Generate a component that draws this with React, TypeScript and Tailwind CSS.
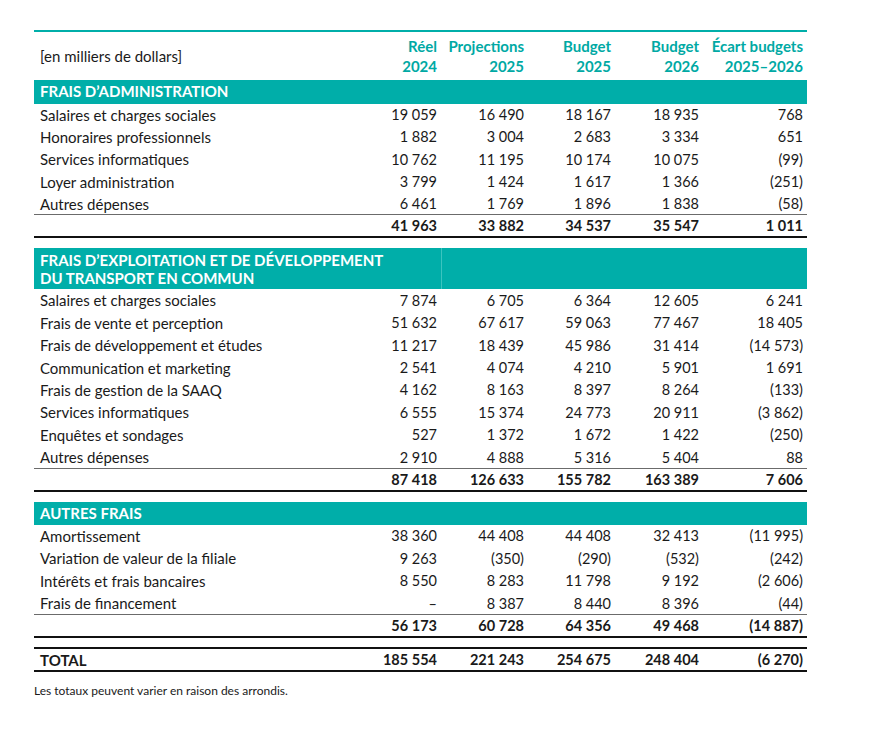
import React from "react";

type Row = { label: string; values: string[] };

type Section = {
  title: string[];
  rows: Row[];
  total: string[];
};

const SECTIONS: Section[] = [
  {
    title: ["FRAIS D’ADMINISTRATION"],
    rows: [
      { label: "Salaires et charges sociales", values: ["19 059", "16 490", "18 167", "18 935", "768"] },
      { label: "Honoraires professionnels", values: ["1 882", "3 004", "2 683", "3 334", "651"] },
      { label: "Services informatiques", values: ["10 762", "11 195", "10 174", "10 075", "(99)"] },
      { label: "Loyer administration", values: ["3 799", "1 424", "1 617", "1 366", "(251)"] },
      { label: "Autres dépenses", values: ["6 461", "1 769", "1 896", "1 838", "(58)"] },
    ],
    total: ["41 963", "33 882", "34 537", "35 547", "1 011"],
  },
  {
    title: ["FRAIS D’EXPLOITATION ET DE DÉVELOPPEMENT", "DU TRANSPORT EN COMMUN"],
    rows: [
      { label: "Salaires et charges sociales", values: ["7 874", "6 705", "6 364", "12 605", "6 241"] },
      { label: "Frais de vente et perception", values: ["51 632", "67 617", "59 063", "77 467", "18 405"] },
      { label: "Frais de développement et études", values: ["11 217", "18 439", "45 986", "31 414", "(14 573)"] },
      { label: "Communication et marketing", values: ["2 541", "4 074", "4 210", "5 901", "1 691"] },
      { label: "Frais de gestion de la SAAQ", values: ["4 162", "8 163", "8 397", "8 264", "(133)"] },
      { label: "Services informatiques", values: ["6 555", "15 374", "24 773", "20 911", "(3 862)"] },
      { label: "Enquêtes et sondages", values: ["527", "1 372", "1 672", "1 422", "(250)"] },
      { label: "Autres dépenses", values: ["2 910", "4 888", "5 316", "5 404", "88"] },
    ],
    total: ["87 418", "126 633", "155 782", "163 389", "7 606"],
  },
  {
    title: ["AUTRES FRAIS"],
    rows: [
      { label: "Amortissement", values: ["38 360", "44 408", "44 408", "32 413", "(11 995)"] },
      { label: "Variation de valeur de la filiale", values: ["9 263", "(350)", "(290)", "(532)", "(242)"] },
      { label: "Intérêts et frais bancaires", values: ["8 550", "8 283", "11 798", "9 192", "(2 606)"] },
      { label: "Frais de financement", values: ["–", "8 387", "8 440", "8 396", "(44)"] },
    ],
    total: ["56 173", "60 728", "64 356", "49 468", "(14 887)"],
  },
];

const HEADINGS = [
  ["Réel", "2024"],
  ["Projections", "2025"],
  ["Budget", "2025"],
  ["Budget", "2026"],
  ["Écart budgets", "2025–2026"],
];

const COLS = "grid grid-cols-[327px_80px_87px_87px_88px_104px]";

// numbers use a narrow no-break space as thousands separator
const nb = (s: string) => s.replace(/ /g, "\u202f");

function Num({ v }: { v: string }) {
  return <div className="text-right pr-[4px] whitespace-nowrap text-[14.5px]">{nb(v)}</div>;
}

function SectionBlock({ section, first }: { section: Section; first: boolean }) {
  const twoLines = section.title.length > 1;
  return (
    <div className={first ? "" : "mt-[10px]"}>
      {/* teal section bar */}
      <div className={`${COLS} bg-[#00aea9] text-white font-bold`}>
        <div className={`col-span-2 px-[6px] whitespace-nowrap ${twoLines ? "py-[2.5px] leading-[18px]" : "leading-[23.5px]"}`}>
          {section.title.map((t) => (
            <div key={t}>{t}</div>
          ))}
        </div>
        <div className={`col-span-4 ${twoLines ? "border-l border-[#3cc4bf]" : ""}`} />
      </div>

      {section.rows.map((r, i) => (
        <div
          key={r.label}
          className={`${COLS} h-[22.4px] items-center ${i === section.rows.length - 1 ? "border-b-[1.5px] border-[#6b6b6b]" : ""}`}
        >
          <div className="pl-[6px] whitespace-nowrap">{r.label}</div>
          {r.values.map((v, j) => (
            <Num key={j} v={v} />
          ))}
        </div>
      ))}

      <div className={`${COLS} h-[23px] items-center font-bold border-b-2 border-[#111]`}>
        <div />
        {section.total.map((v, j) => (
          <Num key={j} v={v} />
        ))}
      </div>
    </div>
  );
}

export default function App() {
  return (
    <div className="min-h-screen bg-white pt-[30px] pl-[34px] text-[15px] text-[#1a1a1a] font-['Lato','Liberation_Sans',sans-serif]">
      <div className="w-[773px]">
        {/* column headings */}
        <div className={`${COLS} border-t-2 border-[#00aea9] pt-[4px] pb-[4px] leading-[20px]`}>
          <div className="pl-[6px] self-center">[en milliers de dollars]</div>
          {HEADINGS.map((h, i) => (
            <div key={i} className="text-right pr-[4px] font-bold text-[#00a9a4] whitespace-nowrap">
              <div>{h[0]}</div>
              <div>{h[1]}</div>
            </div>
          ))}
        </div>

        {SECTIONS.map((s, i) => (
          <SectionBlock key={s.title[0]} section={s} first={i === 0} />
        ))}

        {/* grand total */}
        <div className={`${COLS} mt-[9px] h-[25px] items-center font-bold border-y-2 border-[#111]`}>
          <div className="pl-[6px]">TOTAL</div>
          {["185 554", "221 243", "254 675", "248 404", "(6 270)"].map((v, j) => (
            <Num key={j} v={v} />
          ))}
        </div>

        <p className="mt-[10px] text-[12px]">Les totaux peuvent varier en raison des arrondis.</p>
      </div>
    </div>
  );
}
